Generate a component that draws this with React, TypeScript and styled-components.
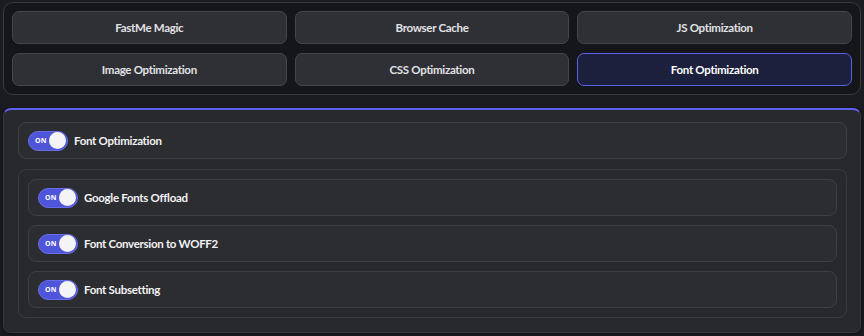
import React from "react";
import styled, { createGlobalStyle } from "styled-components";

const Global = createGlobalStyle`
  html, body { margin: 0; padding: 0; background: #1b1c1f; }
  body { font-family: Lato, "Noto Sans", sans-serif; }
  * { box-sizing: border-box; }
`;

const Page = styled.div`
  width: 864px;
  height: 336px;
  padding: 2px 3px 0 3px;
  display: flex;
  flex-direction: column;
  gap: 13px;
  background: #1b1c1f;
`;

const TabPanel = styled.div`
  background: #151619;
  border: 1px solid #38393d;
  border-radius: 10px;
  padding: 8px;
  display: grid;
  grid-template-columns: repeat(3, 1fr);
  column-gap: 8px;
  row-gap: 9px;
`;

const TabButton = styled.button<{ $active?: boolean }>`
  height: 33px;
  border-radius: 7px;
  border: 1px solid ${(p) => (p.$active ? "#5b60e8" : "#45464b")};
  background: ${(p) => (p.$active ? "#1d203d" : "#2f3035")};
  color: ${(p) => (p.$active ? "#ffffff" : "#e2e2e6")};
  font-family: Lato, "Noto Sans", sans-serif;
  font-size: 11.5px;
  letter-spacing: -0.3px;
  font-weight: 700;
  display: flex;
  align-items: center;
  justify-content: center;
  padding: 0;
`;

const SettingsPanel = styled.div`
  background: #28292d;
  border: 1px solid #36373b;
  border-top: 2px solid #5a5ff0;
  border-radius: 8px;
  padding: 12px 13px 14px 14px;
  display: flex;
  flex-direction: column;
  gap: 10px;
  box-shadow: 0 2px 6px rgba(0, 0, 0, 0.35);
`;

const Row = styled.div`
  height: 37px;
  background: #2c2d31;
  border: 1px solid #3e3f44;
  border-radius: 8px;
  display: flex;
  align-items: center;
  padding-left: 9px;
  gap: 6px;
`;

const Group = styled.div`
  border: 1px solid #3a3b40;
  border-radius: 8px;
  background: #28292d;
  padding: 9px;
  display: flex;
  flex-direction: column;
  gap: 9px;
`;

const Label = styled.span`
  color: #f2f2f4;
  font-size: 11.5px;
  letter-spacing: -0.3px;
  font-weight: 700;
`;

const Track = styled.div`
  width: 40px;
  height: 20px;
  border-radius: 10px;
  background: #4f55d8;
  border: 1px solid #686de6;
  display: flex;
  align-items: center;
  justify-content: space-between;
  padding: 0 1px 0 6px;
  flex-shrink: 0;
`;

const OnText = styled.span`
  color: #ffffff;
  font-size: 7px;
  font-weight: 700;
  letter-spacing: 0.2px;
  font-family: "Noto Sans", sans-serif;
`;

const Knob = styled.span`
  width: 17px;
  height: 17px;
  border-radius: 50%;
  background: #f4f4f6;
`;

const Toggle = () => (
  <Track>
    <OnText>ON</OnText>
    <Knob />
  </Track>
);

const tabs = [
  "FastMe Magic",
  "Browser Cache",
  "JS Optimization",
  "Image Optimization",
  "CSS Optimization",
  "Font Optimization",
];

const subs = ["Google Fonts Offload", "Font Conversion to WOFF2", "Font Subsetting"];

export default function App() {
  return (
    <>
      <Global />
      <Page>
        <TabPanel>
          {tabs.map((t) => (
            <TabButton key={t} $active={t === "Font Optimization"}>
              {t}
            </TabButton>
          ))}
        </TabPanel>
        <SettingsPanel>
          <Row>
            <Toggle />
            <Label>Font Optimization</Label>
          </Row>
          <Group>
            {subs.map((s) => (
              <Row key={s}>
                <Toggle />
                <Label>{s}</Label>
              </Row>
            ))}
          </Group>
        </SettingsPanel>
      </Page>
    </>
  );
}
